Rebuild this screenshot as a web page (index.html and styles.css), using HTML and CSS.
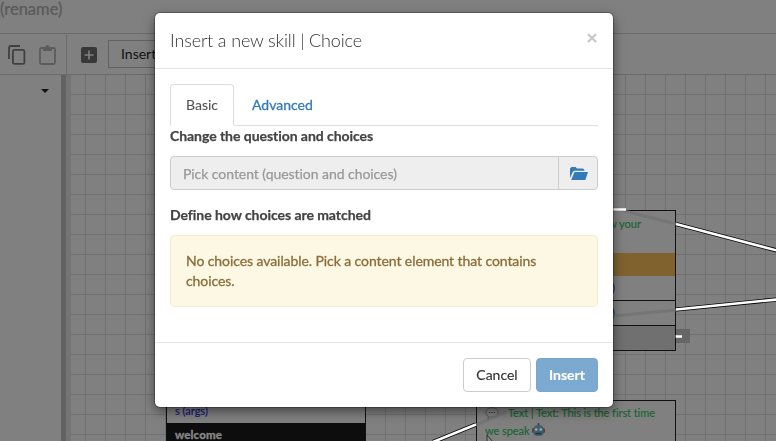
FILE: index.html
```html
<!DOCTYPE html>
<html lang="en">
<head>
<meta charset="utf-8">
<title>Flow editor</title>
<link rel="stylesheet" href="styles.css">
</head>
<body>
<div class="app">
  <header class="title-bar">(rename)</header>
  <div class="toolbar">
    <div class="clipboard">
      <svg class="copy" width="18" height="20" viewBox="0 0 18 20" fill="none" stroke="#404040" stroke-width="1.8"><path d="M1 14V3q0-2 2-2h9"/><rect x="4.900" y="4.900" width="11.500" height="14" rx="1.500"/></svg>
      <svg class="paste" width="17" height="20" viewBox="0 0 17 20"><rect x="1" y="3" width="15" height="16" rx="1.500" fill="none" stroke="#5c5c5c" stroke-width="1.800"/><path d="M4 2h2.500a2 2 0 0 1 4 0H13v4H4z" fill="#5c5c5c"/></svg>
    </div>
    <div class="actions">
      <svg width="16" height="16" viewBox="0 0 16 16"><rect width="16" height="16" rx="2" fill="#383838"/><path d="M8 3.500v9M3.500 8h9" stroke="#808080" stroke-width="1.600"/></svg>
      <div class="insert-skill">Insert skill</div>
    </div>
  </div>
  <div class="workspace">
    <aside class="sidebar"><i class="caret"></i></aside>
    <div class="splitter"></div>
    <main class="canvas">
      <section class="node node-a">
        <div class="say">know your</div>
        <div class="wait"></div>
        <div class="row tall">(args)</div>
        <div class="row">(args)</div>
        <div class="row last"></div>
      </section>
      <i class="port"></i>
      <section class="node node-b">
        <div class="args">s (args)</div>
        <div class="name">welcome</div>
      </section>
      <section class="node node-c">
        <svg class="bubble" width="14" height="13" viewBox="0 0 14 13"><path d="M7 .7c3.500 0 6.200 2 6.200 4.700S10.500 10 7 10H5.500L3 12.200l.3-3C1.700 8.400.8 7 .8 5.400.8 2.700 3.500.7 7 .7z" fill="none" stroke="#505050"/><path d="M4 5.500h1.200m1.200 0h1.200m1.200 0H10" stroke="#383838" stroke-width="1.200"/></svg><span>Text | Text: This is the first time</span><br>
        <span>we speak</span>
        <svg class="robot" width="13" height="14" viewBox="0 0 13 14"><path d="M6.500 0v3" stroke="#752926" stroke-width="1.600"/><rect y="5" width="13" height="5" rx="1.500" fill="#713326"/><path d="M1.500 6q0-4 5-4t5 4v5q-1 2-5 2t-5-2z" fill="#3b6271"/><circle cx="4.200" cy="6.500" r="1.300" fill="#a0aaa9"/><circle cx="8.800" cy="6.500" r="1.300" fill="#a0aaa9"/><path d="M3.500 10.500h6" stroke="#282f35" stroke-width="1.500"/></svg>
      </section>
      <svg class="wires" width="710" height="366" viewBox="66 75 710 366" fill="none">
        <path d="M613 208L676 224M613 316L676 310M613 338L676 336.500M476 425L506 412" stroke="#707070" stroke-opacity=".7" stroke-width="3"/>
        <path d="M676 224L777 250.500M676 309.500L777 299.500M433 442L476 424.500" stroke="#050505" stroke-width="4.200"/>
        <path d="M676 224L777 250.500M676 309.500L777 299.500M433 442L476 424.500M613 209.500H626M676 336.500H682" stroke="#fff" stroke-width="2.600"/>
        <path d="M487 435v10l3-3h3z" fill="#888" stroke="#333"/>
      </svg>
    </main>
  </div>
</div>
<div class="dialog" role="dialog">
  <div class="dialog-head"><h4>Insert a new skill | Choice</h4><svg width="10" height="10" viewBox="0 0 10 10"><path d="M1 1l8 8M9 1L1 9" stroke="#c9c9c9" stroke-width="2.400"/></svg></div>
  <div class="dialog-body">
    <nav class="tabs"><a class="tab active">Basic</a><a class="tab">Advanced</a></nav>
    <h5 class="first">Change the question and choices</h5>
    <div class="picker">
      <div class="field">Pick content (question and choices)</div>
      <div class="browse"><svg width="18" height="13" viewBox="0 0 18 13" fill="#337ab7"><path d="M0 11V1.500L1.500 0h4L7 1.500h6L14.500 3v.8H4.200L2.800 5z"/><path d="M4.500 5H18l-2.700 8H1.200z"/></svg></div>
    </div>
    <h5>Define how choices are matched</h5>
    <div class="alert">No choices available. Pick a content element that contains choices.</div>
  </div>
  <div class="dialog-foot"><button class="cancel">Cancel</button><button class="primary">Insert</button></div>
</div>
</body>
</html>
```
FILE: styles.css
```css
* { box-sizing: border-box; }
body { margin: 0; width: 776px; height: 441px; overflow: hidden; font: 14px/20px Lato, sans-serif; font-variant-ligatures: none; color: #444; background: #808080; }
.app { height: 441px; display: flex; flex-direction: column; }
.title-bar { height: 34px; border-bottom: 1px solid #6b6b6b; font-size: 16.500px; line-height: 20px; margin-top: -1px; padding-bottom: 0; color: #595959; height: 35px; -webkit-text-stroke: .2px; }
.toolbar { height: 41px; display: flex; border-bottom: 1px solid #6b6b6b; }
.clipboard { width: 67px; border-right: 1px solid #6b6b6b; display: flex; padding: 11px 0 0 8px; gap: 13px; }
.actions { display: flex; align-items: center; padding: 2px 0 0 14px; gap: 11px; }
.insert-skill { width: 100px; height: 28px; margin-top: -2px; border: 1px solid #626262; padding-left: 12px; line-height: 26px; color: #111; white-space: nowrap; }
.workspace { flex: 1; display: flex; min-height: 0; }
.sidebar { width: 61px; padding: 14px 0 0 41px; }
.caret { display: block; width: 8px; border: 4px solid transparent; border-top-color: #111; border-bottom: 0; }
.splitter { width: 5px; background: #626262; }
.canvas { position: relative; flex: 1; overflow: hidden; background-image: linear-gradient(90deg, #747474 5px, transparent 5px), linear-gradient(90deg, transparent 19px, #707070 19px), linear-gradient(transparent 19px, #707070 19px); background-size: 100% 100%, 20px 20px, 20px 20px; }
.node { position: absolute; width: 200px; border: 1px solid #111; background: #808080; font-size: 11px; }
.node-a { left: 410px; top: 135px; height: 141px; }
.node-b { left: 100px; top: 275px; height: 100px; }
.node-c { left: 410px; top: 325px; height: 60px; padding: 3px 8px; color: #176532; line-height: 18px; letter-spacing: -.06px; -webkit-text-stroke: .15px; }
.say { height: 42px; padding: 3px 34px 0 0; text-align: right; color: #176532; -webkit-text-stroke: .15px; }
.wait { height: 23px; background: #80622f; }
.row { height: 25px; border-bottom: 1px solid #111; padding-right: 60px; text-align: right; color: #10106f; line-height: 24px; }
.row.last { height: 24px; border: 0; background: #707070; }
.port { position: absolute; left: 610px; top: 254px; width: 14px; height: 14px; background: #666; }
.args { margin-top: 50px; height: 22px; padding-left: 8px; line-height: 20px; color: #151574; -webkit-text-stroke: .15px; }
.name { height: 27px; padding-left: 8px; background: #0d0d0d; color: #858585; font-size: 11.500px; font-weight: 900; line-height: 24px; letter-spacing: .1px; -webkit-text-stroke: .3px; }
.bubble { margin-right: 9px; vertical-align: -3px; }
.robot { vertical-align: -2px; }
.wires { position: absolute; left: 0; top: 0; }
.dialog { position: fixed; left: 155px; top: 13px; width: 458px; height: 394px; background: #fff; border-radius: 5px; box-shadow: 0 0 0 1px rgba(0,0,0,.25), 0 4px 12px rgba(0,0,0,.5); display: flex; flex-direction: column; }
.dialog-head { height: 56px; padding: 0 16px 0 15px; border-bottom: 1px solid #e5e5e5; display: flex; justify-content: space-between; align-items: center; }
.dialog-head svg { margin-top: -6px; }
h4 { margin: -2px 0 0; font-size: 18px; font-weight: 300; letter-spacing: -.15px; color: #333; }
.dialog-body { height: 273px; padding: 15px; }
.tabs { display: flex; height: 42px; border-bottom: 1px solid #ddd; gap: 2px; }
.tab { height: 42px; padding: 11px 16px; color: #337ab7; -webkit-text-stroke: .3px; }
.tab.active { padding: 10px 15px; border: 1px solid #ddd; border-bottom-color: #fff; border-radius: 4px 4px 0 0; color: #555; -webkit-text-stroke: .1px; }
h5 { margin: 15px 0 10px; font-size: 14px; font-weight: 700; line-height: 20px; letter-spacing: -.05px; color: #444; -webkit-text-stroke: .25px; }
h5.first { margin: 0 0 10px; }
.picker { display: flex; height: 34px; border: 1px solid #ccc; border-radius: 4px; background: #eee; }
.field { flex: 1; padding: 7px 12px; line-height: 20px; letter-spacing: -.05px; color: #999; -webkit-text-stroke: .25px; }
.browse { width: 39px; border-left: 1px solid #ccc; display: grid; place-items: center; padding-left: 2px; }
.alert { height: 72px; padding: 15px; border: 1px solid #faebcc; border-radius: 4px; background: #fcf8e3; color: #8a6d3b; letter-spacing: -.08px; -webkit-text-stroke: .3px; }
.dialog-foot { border-top: 1px solid #e5e5e5; height: 65px; padding: 15px; display: flex; gap: 5px; justify-content: flex-end; margin-top: auto; }
button { height: 34px; padding: 0 0 1px; border: 1px solid #ccc; border-radius: 4px; background: #fff; font: 14px Lato, sans-serif; color: #333; -webkit-text-stroke: .15px; }
.cancel { width: 68px; }
.primary { width: 62px; border-color: #78a6ce; background: #7ba9d0; color: #fff; font-weight: 700; }
```
